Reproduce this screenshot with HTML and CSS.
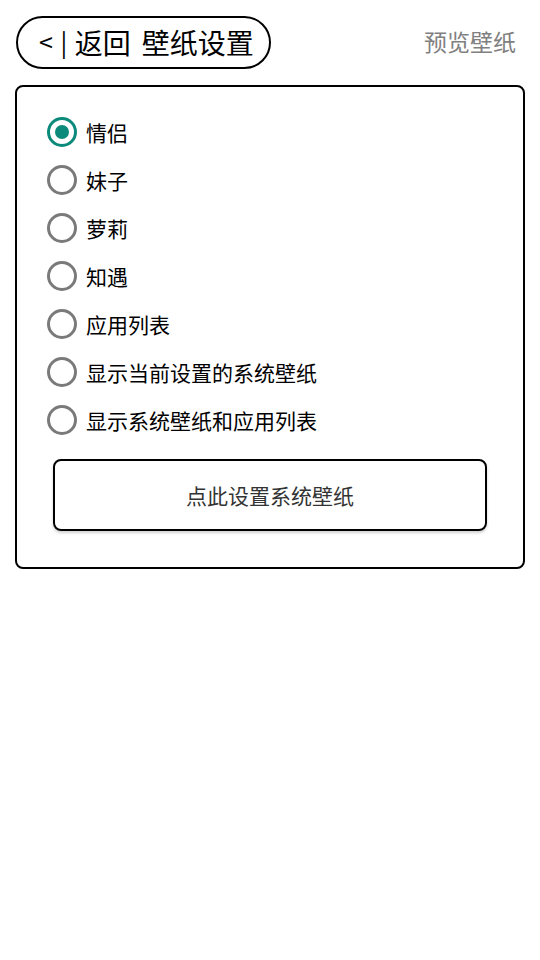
FILE: index.html
```html
<!DOCTYPE html>
<html lang="zh-CN">
<head>
<meta charset="utf-8">
<title>壁纸设置</title>
<link rel="stylesheet" href="styles.css">
</head>
<body>
<div class="page">
  <header class="topbar">
    <div class="back-pill"><span class="arrow">&lt; | </span><span>返回</span><span class="title">壁纸设置</span></div>
    <div class="preview">预览壁纸</div>
  </header>
  <section class="card">
    <ul class="options">
      <li class="option"><span class="radio checked"></span><span class="label">情侣</span></li>
      <li class="option"><span class="radio"></span><span class="label">妹子</span></li>
      <li class="option"><span class="radio"></span><span class="label">萝莉</span></li>
      <li class="option"><span class="radio"></span><span class="label">知遇</span></li>
      <li class="option"><span class="radio"></span><span class="label">应用列表</span></li>
      <li class="option"><span class="radio"></span><span class="label">显示当前设置的系统壁纸</span></li>
      <li class="option"><span class="radio"></span><span class="label">显示系统壁纸和应用列表</span></li>
    </ul>
    <div class="action">点此设置系统壁纸</div>
  </section>
</div>
</body>
</html>
```
FILE: styles.css
```css
* { box-sizing: border-box; }
html, body { margin: 0; padding: 0; background: #fff; }
body {
  font-family: "Noto Sans CJK SC", "Noto Sans", sans-serif;
  color: #000;
}
.page {
  padding: 16px 15px 0 15px;
}
.topbar {
  display: flex;
  justify-content: space-between;
  align-items: center;
  height: 53px;
}
.back-pill {
  margin-left: 1px;
  height: 53px;
  display: flex;
  align-items: center;
  padding: 0 15px 2px 21px;
  border: 2px solid #000;
  border-radius: 27px;
  font-size: 28px;
  line-height: 1;
  white-space: pre;
}
.arrow {
  font-size: 25px;
  margin-right: 0;
  word-spacing: 2px;
}
.title {
  margin-left: 11px;
}
.preview {
  font-size: 23px;
  color: #808080;
  margin-right: 9px;
  padding-bottom: 3px;
  line-height: 1;
}
.card {
  margin-top: 16px;
  border: 2px solid #000;
  border-radius: 8px;
  padding: 21px 36px 36px 30px;
  height: 484px;
}
.options {
  list-style: none;
  margin: 0;
  padding: 0;
}
.option {
  display: flex;
  align-items: center;
  height: 48px;
}
.radio {
  width: 30px;
  height: 30px;
  border: 3px solid #7a7a7a;
  border-radius: 50%;
  display: flex;
  align-items: center;
  justify-content: center;
  flex: none;
}
.radio.checked {
  border-color: #0b8a7b;
}
.radio.checked::after {
  content: "";
  width: 14px;
  height: 14px;
  border-radius: 50%;
  background: #0b8a7b;
}
.label {
  margin-left: 9px;
  font-size: 21px;
  line-height: 1;
}
.action {
  margin: 15px 0 0 6px;
  height: 72px;
  border: 2px solid #000;
  border-radius: 8px;
  display: flex;
  align-items: center;
  justify-content: center;
  font-size: 21px;
  color: #333;
  box-shadow: 0 2px 3px rgba(0,0,0,0.18);
}
```
